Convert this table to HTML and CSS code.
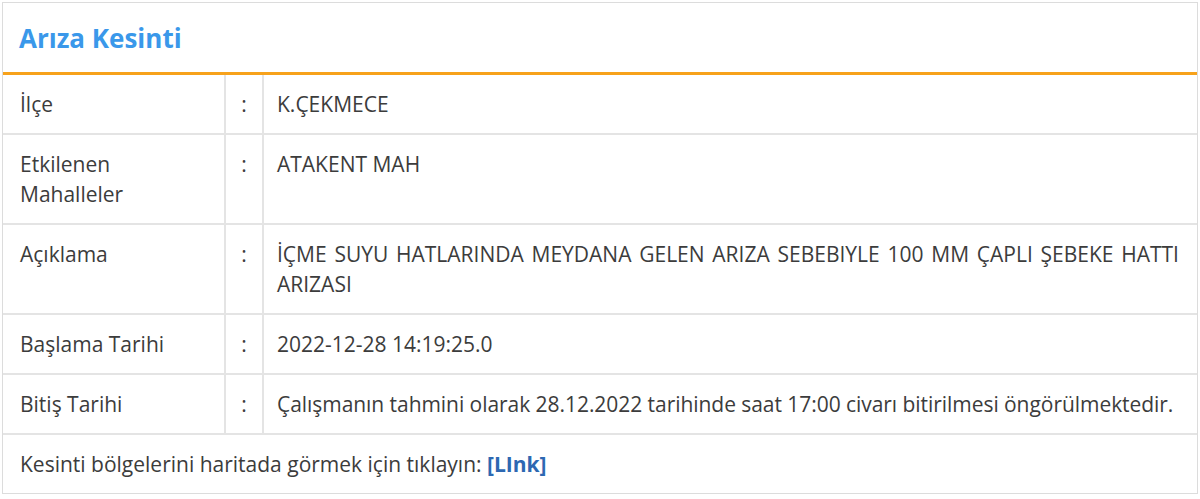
FILE: index.html
```html
<!DOCTYPE html>
<html lang="tr">
<head>
<meta charset="utf-8">
<link rel="stylesheet" href="styles.css">
</head>
<body>
<div class="panel">
  <div class="panel-head"><h2 class="title">Arıza Kesinti</h2></div>
  <table class="info">
    <colgroup><col class="c1"><col class="c2"><col></colgroup>
    <tr><td class="lbl">İlçe</td><td class="sep">:</td><td class="val">K.ÇEKMECE</td></tr>
    <tr><td class="lbl">Etkilenen Mahalleler</td><td class="sep">:</td><td class="val">ATAKENT MAH</td></tr>
    <tr><td class="lbl">Açıklama</td><td class="sep">:</td><td class="val just">İÇME SUYU HATLARINDA MEYDANA GELEN ARIZA SEBEBIYLE 100 MM ÇAPLI ŞEBEKE HATTI ARIZASI</td></tr>
    <tr><td class="lbl">Başlama Tarihi</td><td class="sep">:</td><td class="val">2022-12-28 14:19:25.0</td></tr>
    <tr><td class="lbl">Bitiş Tarihi</td><td class="sep">:</td><td class="val tight">Çalışmanın tahmini olarak 28.12.2022 tarihinde saat 17:00 civarı bitirilmesi öngörülmektedir.</td></tr>
    <tr><td class="full" colspan="3">Kesinti bölgelerini haritada görmek için tıklayın: <a class="lnk" href="#">[LInk]</a></td></tr>
  </table>
</div>
</body>
</html>
```
FILE: styles.css
```css
html, body { margin: 0; padding: 0; background: #fff; }
body { padding: 2px 2px 0 2px; font-family: "Open Sans", "Noto Sans", sans-serif; color: #3c3c3c; }
.panel { border: 1px solid #dcdcdc; width: 1196px; box-sizing: border-box; }
.panel-head { height: 72px; border-bottom: 3px solid #f7a21b; display: flex; align-items: center; padding: 0 0 0 16px; box-sizing: border-box; }
.title { margin: 0; font-size: 26px; font-weight: 700; color: #3a98ea; }
.info { width: 100%; border-collapse: collapse; table-layout: fixed; font-size: 21px; line-height: 30px; }
.c1 { width: 222px; }
.c2 { width: 38px; }
.info td { border: 2px solid #e4e4e4; vertical-align: top; padding: 14px 20px 14px 17px; }
.info tr:first-child td { border-top: 0; }
.info td:first-child { border-left: 0; }
.info td:last-child { border-right: 0; }
.info tr:last-child td { border-bottom: 0; }
.info .sep { text-align: center; padding-left: 0; padding-right: 0; }
.info .val { padding-left: 13px; padding-right: 18px; }
.tight { white-space: nowrap; letter-spacing: -0.05px; }
.just { text-align: justify; }
.lnk { color: #2d68b2; font-weight: 700; text-decoration: none; }
```
